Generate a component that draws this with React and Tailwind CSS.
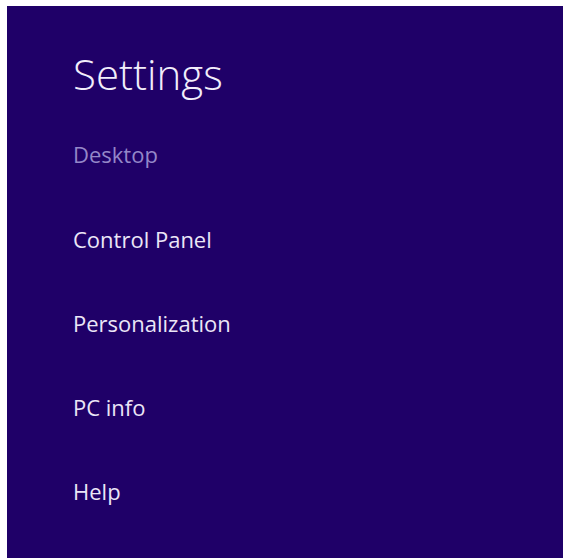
const items = ["Control Panel", "Personalization", "PC info", "Help"];

export default function App() {
  return (
    <div className="w-[567px] h-[559px] bg-white pt-[6px] pl-[7px]" style={{ fontFamily: '"Open Sans", "Noto Sans", sans-serif' }}>
      <div className="w-[556px] h-[552px] bg-[#1f0068] pl-[66px] flex flex-col">
        <h1 className="mt-[40px] h-[56px] text-[42px] leading-[56px] font-light text-[#f2eefb]">Settings</h1>
        <div className="mt-[37px] h-[30px] text-[22px] leading-[30px] text-[#9487c8]">Desktop</div>
        <ul className="mt-[55px] flex flex-col gap-[54px]">
          {items.map((item) => (
            <li key={item} className="h-[30px] text-[22px] leading-[30px] text-[#ebe6f7]">
              {item}
            </li>
          ))}
        </ul>
      </div>
    </div>
  );
}
